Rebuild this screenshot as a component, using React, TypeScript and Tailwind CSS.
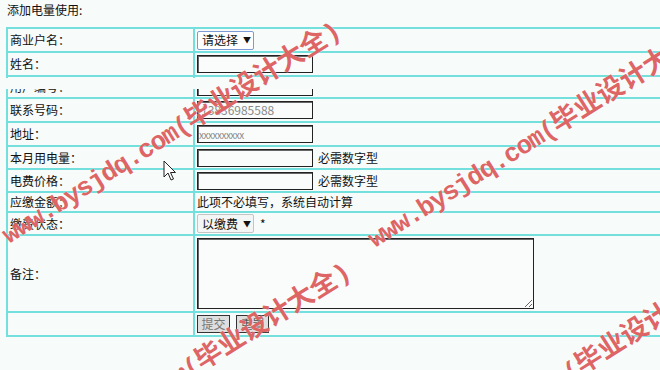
import type { ReactNode } from "react";

const FONT = "font-['Noto_Sans_CJK_SC','Noto_Sans',sans-serif]";

function TextBox({ value, muted }: { value?: string; muted?: "phone" | "addr" }) {
  return (
    <div
      className={`flex h-[18px] w-[116px] items-center overflow-hidden border border-[#222] bg-[#f9fcfb] shadow-[inset_1px_1px_0_#666] ${
        muted === "addr"
          ? "pl-px text-[10px] tracking-[-0.5px] text-[#8a8a8a]"
          : "pl-[3px] text-[12px] text-[#8a8a8a]"
      }`}
    >
      {value}
    </div>
  );
}

function FakeSelect({ label, focused }: { label: string; focused?: boolean }) {
  return (
    <div
      className={`flex h-[19px] w-[57px] items-center gap-[5px] rounded-[2px] border pl-[4px] text-[12px] ${
        focused ? "border-[#7c9bd6] bg-white" : "border-[#c4c4c4] bg-[#f4f6f5]"
      }`}
    >
      <span>{label}</span>
      <span className="text-[8px]">▼</span>
    </div>
  );
}

function Watermark({ className }: { className: string }) {
  return (
    <div
      className={`pointer-events-none absolute origin-bottom-left -rotate-[32deg] whitespace-nowrap text-[26px] font-bold leading-none text-[#d63a3a]/80 [text-shadow:0_0_1px_#fff] ${className}`}
    >
      <span className="font-['Liberation_Mono',monospace] tracking-[-1.2px]">www.bysjdq.com(</span>
      <span className="font-['Noto_Sans_CJK_SC',sans-serif] text-[27px]">毕业设计大全</span>
      <span className="font-['Liberation_Mono',monospace]">)</span>
    </div>
  );
}

type Row = { label: string; height: string; content: ReactNode };

const rows: Row[] = [
  { label: "商业户名：", height: "h-[24px]", content: <FakeSelect label="请选择" focused /> },
  { label: "姓名：", height: "h-[24px]", content: <TextBox /> },
  { label: "用户编号：", height: "h-[22px]", content: <TextBox /> },
  { label: "联系号码：", height: "h-[24px]", content: <TextBox value="13836985588" muted="phone" /> },
  { label: "地址：", height: "h-[24px]", content: <TextBox value="xxxxxxxxxx" muted="addr" /> },
  {
    label: "本月用电量：",
    height: "h-[23px]",
    content: (
      <div className="flex items-center gap-[5px]">
        <TextBox />
        <span>必需数字型</span>
      </div>
    ),
  },
  {
    label: "电费价格：",
    height: "h-[23px]",
    content: (
      <div className="flex items-center gap-[5px]">
        <TextBox />
        <span>必需数字型</span>
      </div>
    ),
  },
  { label: "应缴金额：", height: "h-[20px]", content: <span>此项不必填写，系统自动计算</span> },
  {
    label: "缴费状态：",
    height: "h-[23px]",
    content: (
      <div className="flex items-center gap-[6px]">
        <FakeSelect label="以缴费" />
        <span>*</span>
      </div>
    ),
  },
  {
    label: "备注：",
    height: "h-[77px]",
    content: (
      <textarea
        readOnly
        className="block h-[71px] w-[337px] border border-[#222] bg-[#f9fcfb] shadow-[inset_1px_1px_0_#666] outline-none"
      />
    ),
  },
  {
    label: "",
    height: "h-[24px]",
    content: (
      <div className="flex items-center gap-[6px]">
        <button
          type="button"
          className="h-[18px] w-[33px] border border-[#333] bg-[#dedede] text-[12px] leading-none text-[#777]"
        >
          提交
        </button>
        <button
          type="button"
          className="h-[18px] w-[33px] border border-[#333] bg-[#dedede] text-[12px] leading-none text-[#555]"
        >
          重置
        </button>
      </div>
    ),
  },
];

export default function App() {
  return (
    <div className={`relative h-[370px] w-[660px] overflow-hidden bg-[#f7fbfa] text-[12px] text-[#111] ${FONT}`}>
      <p className="pl-[7px] pt-[2px] leading-4">添加电量使用:</p>

      <table className="ml-[6px] mt-[9px] w-[720px] border-collapse">
        <tbody>
          {rows.map((row, i) => (
            <tr key={i} className={row.height}>
              <td className="w-[187px] border-2 border-[#74e0de] px-[2px] align-middle">{row.label}</td>
              <td className="border-2 border-[#74e0de] pl-[2px] align-middle">{row.content}</td>
            </tr>
          ))}
        </tbody>
      </table>

      {/* glitch band over the third row */}
      <div className="absolute left-0 top-[78px] h-[11px] w-full bg-[#f7fbfa]" />

      {/* mouse pointer */}
      <svg className="absolute left-[163px] top-[160px]" width="14" height="22" viewBox="0 0 14 22">
        <path d="M1 1 L1 17 L5 13 L8 20 L10.5 19 L7.5 12.5 L12.5 12.5 Z" fill="#fff" stroke="#222" strokeWidth="1" />
      </svg>

      <Watermark className="left-[12px] top-[218px]" />
      <Watermark className="left-[378px] top-[222px]" />
      <Watermark className="left-[22px] top-[459px]" />
      <Watermark className="left-[402px] top-[463px]" />
    </div>
  );
}
